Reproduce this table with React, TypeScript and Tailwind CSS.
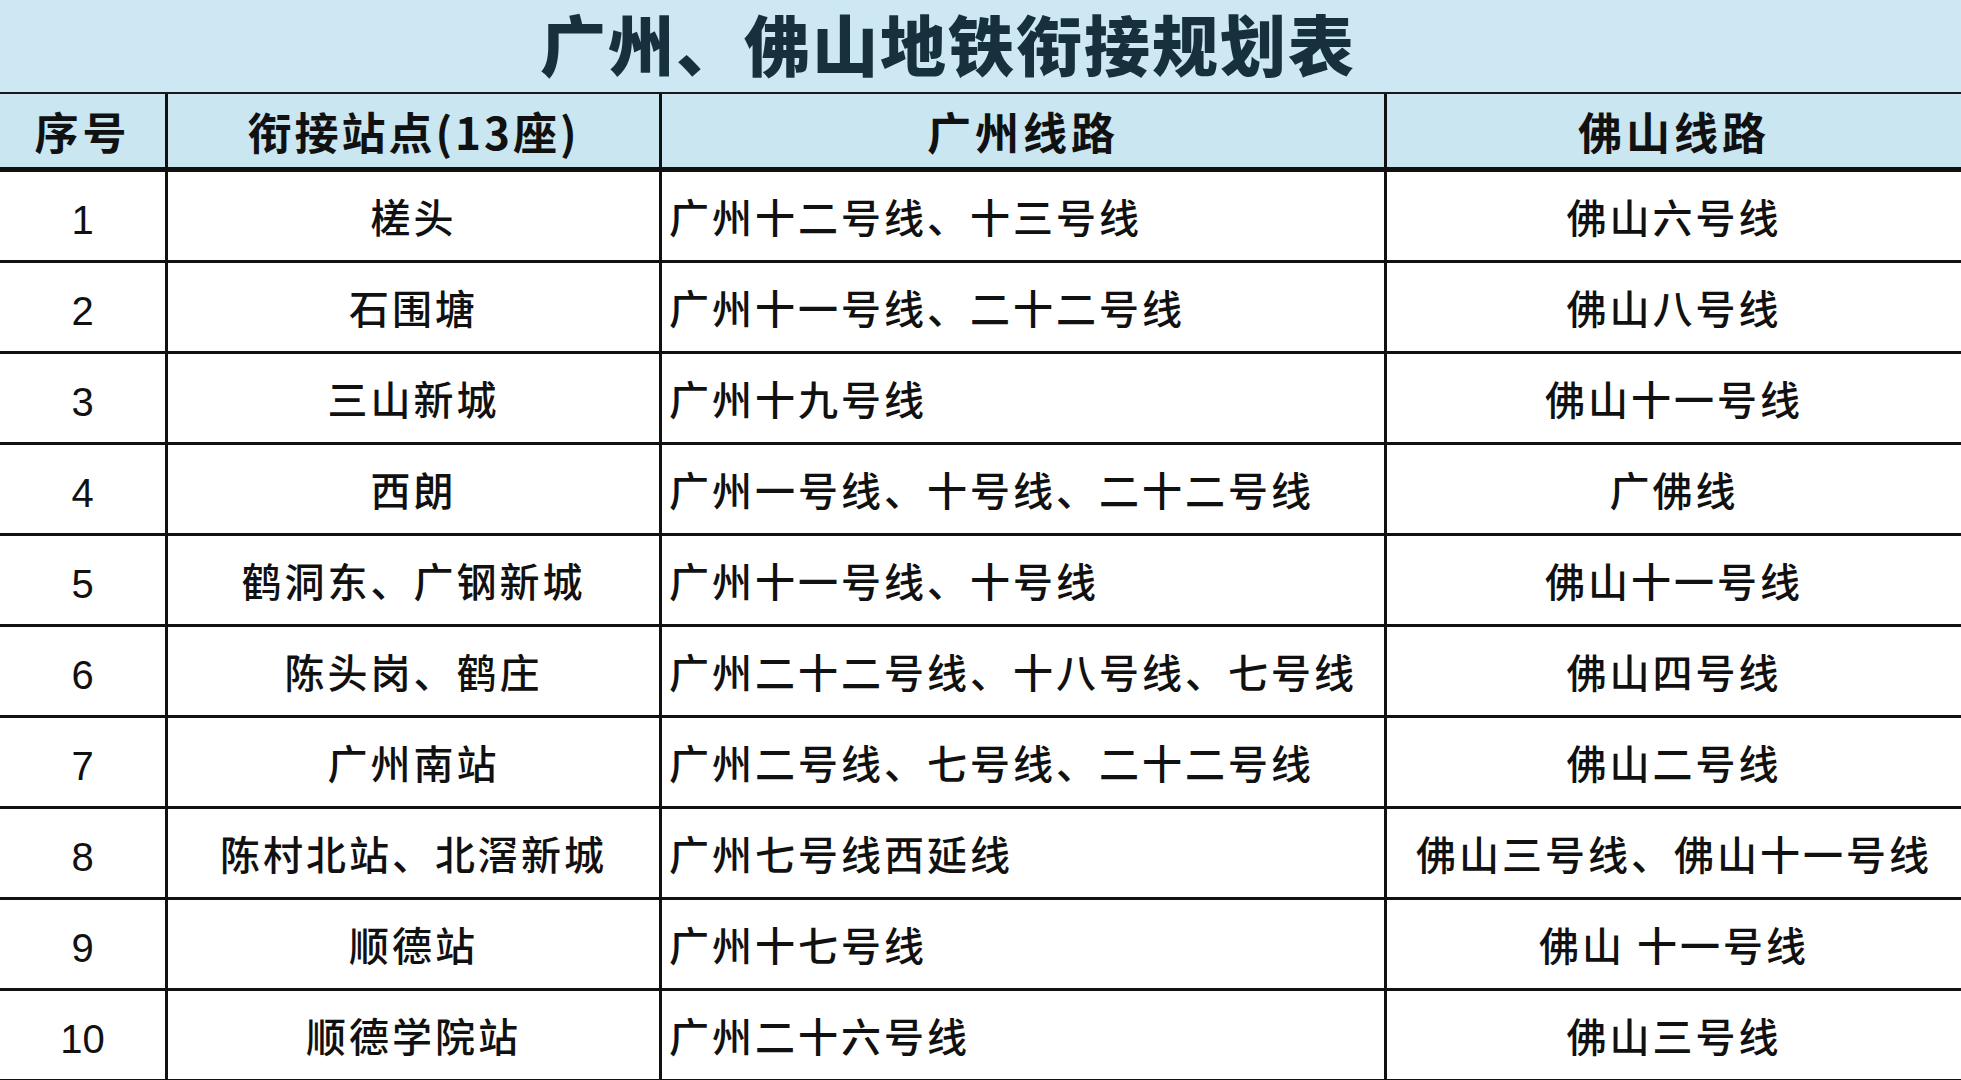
import React from "react";

const rows: [string, string, string, string][] = [
  ["1", "槎头", "广州十二号线、十三号线", "佛山六号线"],
  ["2", "石围塘", "广州十一号线、二十二号线", "佛山八号线"],
  ["3", "三山新城", "广州十九号线", "佛山十一号线"],
  ["4", "西朗", "广州一号线、十号线、二十二号线", "广佛线"],
  ["5", "鹤洞东、广钢新城", "广州十一号线、十号线", "佛山十一号线"],
  ["6", "陈头岗、鹤庄", "广州二十二号线、十八号线、七号线", "佛山四号线"],
  ["7", "广州南站", "广州二号线、七号线、二十二号线", "佛山二号线"],
  ["8", "陈村北站、北滘新城", "广州七号线西延线", "佛山三号线、佛山十一号线"],
  ["9", "顺德站", "广州十七号线", "佛山 十一号线"],
  ["10", "顺德学院站", "广州二十六号线", "佛山三号线"],
];

const font = { fontFamily: '"Noto Sans CJK SC", "Noto Sans", sans-serif' };
const digitFont = { fontFamily: '"Liberation Sans", "Noto Sans CJK SC", sans-serif' };

export default function App() {
  return (
    <div className="w-[1961px] h-[1080px] overflow-hidden bg-white" style={font}>
      <div className="h-[92px] bg-[#cde8f3] flex items-start pl-[540px] pt-[2px]">
        <h1 className="text-[66px] leading-[80px] font-black text-[#16313d] tracking-[2px] whitespace-nowrap">
          广州、佛山地铁衔接规划表
        </h1>
      </div>
      <div className="grid grid-cols-[168px_494px_725px_574px] border-t-2 border-[#1a1a1a]">
        <div className="h-[78px] bg-[#c9e6f1] border-r-[3px] border-b-[5px] border-[#111] flex items-center justify-center text-[44px] font-bold text-[#111] tracking-[4px]">
          序号
        </div>
        <div className="h-[78px] bg-[#c9e6f1] border-r-[3px] border-b-[5px] border-[#111] flex items-center justify-center text-[44px] font-bold text-[#111] tracking-[3px]">
          衔接站点(13座)
        </div>
        <div className="h-[78px] bg-[#c9e6f1] border-r-[3px] border-b-[5px] border-[#111] flex items-center justify-center text-[44px] font-bold text-[#111] tracking-[4px]">
          广州线路
        </div>
        <div className="h-[78px] bg-[#c9e6f1] border-b-[5px] border-[#111] flex items-center justify-center text-[44px] font-bold text-[#111] tracking-[4px]">
          佛山线路
        </div>
        {rows.map((r) => (
          <React.Fragment key={r[0]}>
            <div
              className="h-[91px] border-r-[3px] border-b-[3px] border-[#111] flex items-center justify-center pt-[8px] text-[40px] text-[#111]"
              style={digitFont}
            >
              {r[0]}
            </div>
            <div className="h-[91px] border-r-[3px] border-b-[3px] border-[#111] flex items-center justify-center text-[40px] font-medium text-[#111] tracking-[3px] whitespace-nowrap">
              {r[1]}
            </div>
            <div className="h-[91px] border-r-[3px] border-b-[3px] border-[#111] flex items-center pl-[7px] text-[40px] font-medium text-[#111] tracking-[3px] whitespace-nowrap">
              {r[2]}
            </div>
            <div className="h-[91px] border-b-[3px] border-[#111] flex items-center justify-center text-[40px] font-medium text-[#111] tracking-[3px] whitespace-pre">
              {r[3]}
            </div>
          </React.Fragment>
        ))}
      </div>
    </div>
  );
}
